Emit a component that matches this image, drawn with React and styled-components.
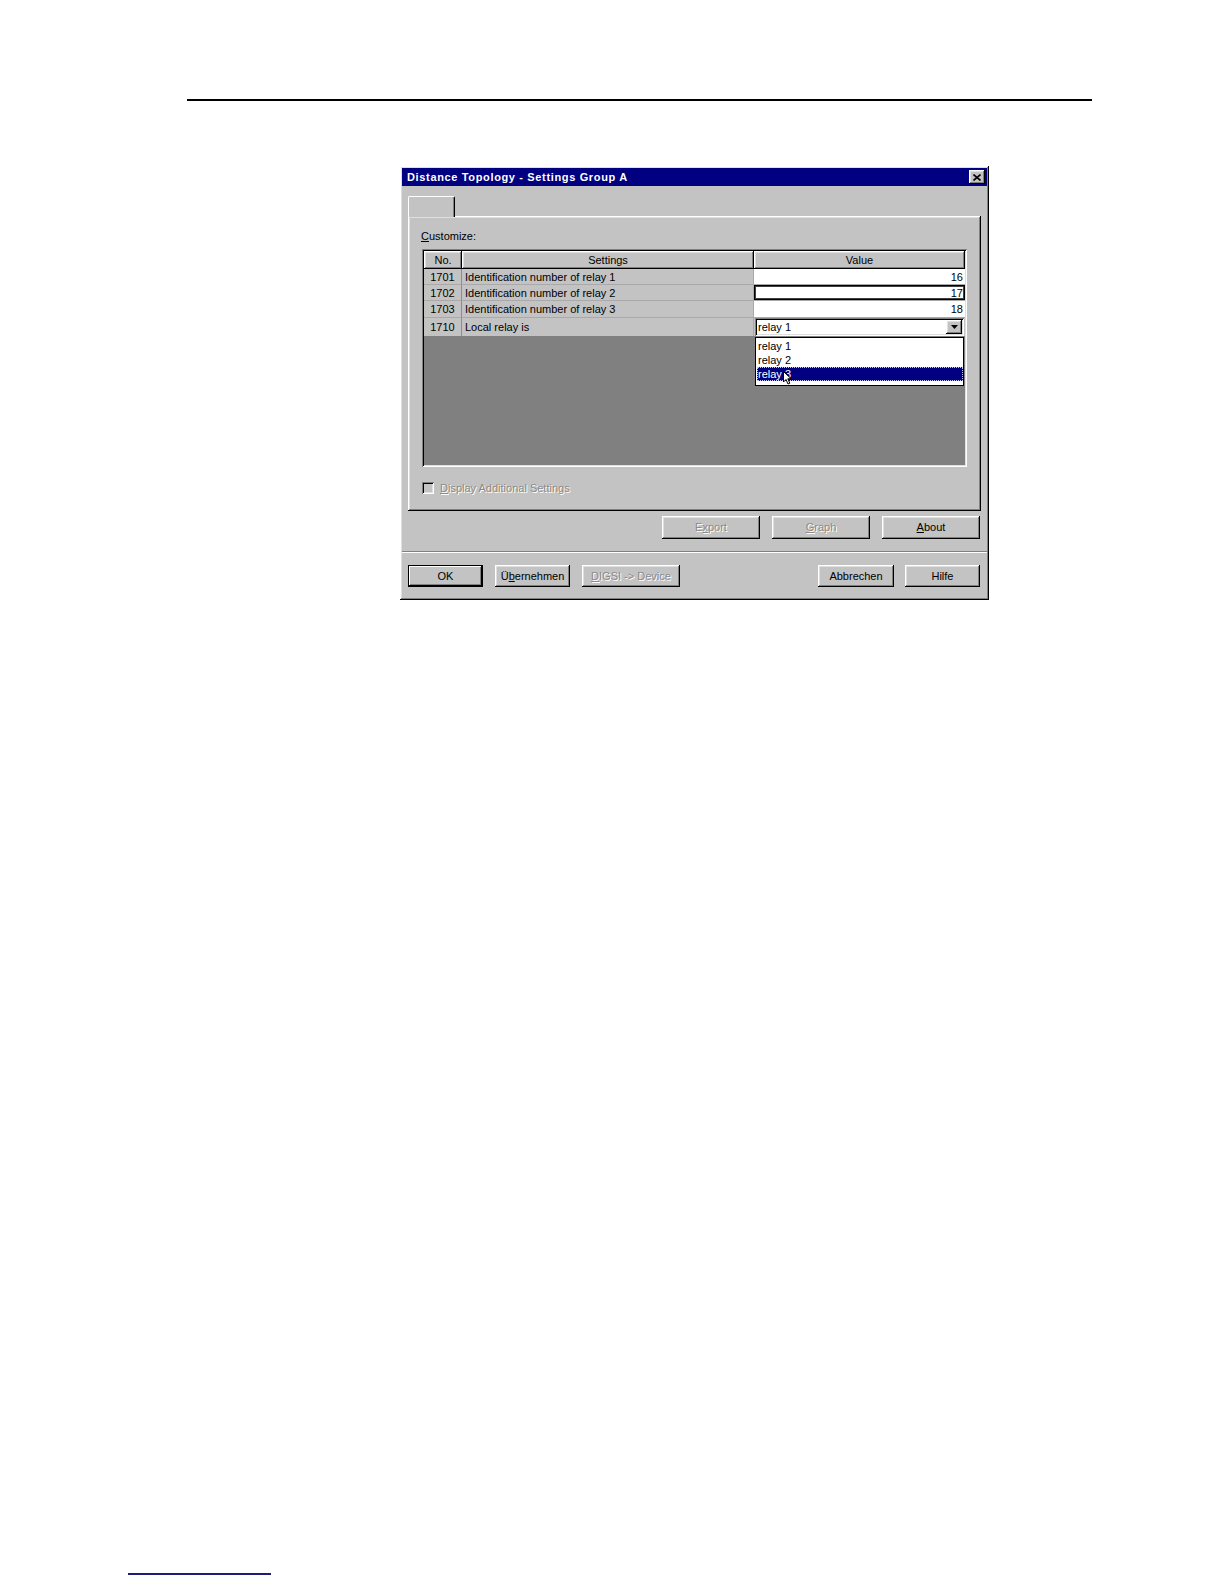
import React from "react";
import styled, { createGlobalStyle, css } from "styled-components";

const GlobalStyle = createGlobalStyle`
  html, body { margin: 0; padding: 0; background: #ffffff; }
  body { font-family: "Liberation Sans", Arial, sans-serif; }
  * { box-sizing: border-box; }
`;

const raised = css`
  box-shadow: inset -1px -1px #000000, inset 1px 1px #ffffff,
    inset -2px -2px #808080, inset 2px 2px #dfdfdf;
`;
const sunken = css`
  box-shadow: inset 1px 1px #808080, inset -1px -1px #ffffff,
    inset 2px 2px #000000, inset -2px -2px #dfdfdf;
`;

const Page = styled.div`
  width: 100%;
  height: 1584px;
  display: flex;
  flex-direction: column;
  padding-top: 99px;
  background: #ffffff;
  overflow: hidden;
`;

const HeaderRule = styled.div`
  margin-left: 187px;
  width: 905px;
  height: 2px;
  background: #000000;
`;

const FooterRule = styled.div`
  margin-top: auto;
  margin-bottom: 9px;
  margin-left: 128px;
  width: 143px;
  height: 2px;
  background: #1c1c7a;
`;

const Dialog = styled.div`
  margin: 65px 0 0 400px;
  width: 589px;
  height: 434px;
  padding: 2px;
  background: #c3c3c3;
  ${raised};
  display: flex;
  flex-direction: column;
  font-size: 11px;
  color: #000;
`;

const TitleBar = styled.div`
  height: 18px;
  background: #000080;
  display: flex;
  align-items: center;
  justify-content: space-between;
  padding: 0 2px 0 5px;
`;

const TitleText = styled.span`
  color: #ffffff;
  font-weight: bold;
  font-size: 11px;
  letter-spacing: 0.65px;
`;

const CloseBtn = styled.div`
  width: 16px;
  height: 14px;
  background: #c3c3c3;
  ${raised};
  display: flex;
  align-items: center;
  justify-content: center;
`;

const Body = styled.div`
  flex: 1;
  display: flex;
  flex-direction: column;
  padding: 10px 6px 11px 6px;
`;

const TabStrip = styled.div`
  height: 20px;
  display: flex;
  align-items: flex-end;
`;

const Tab = styled.div`
  position: relative;
  z-index: 1;
  width: 47px;
  height: 21px;
  margin-bottom: -1px;
  background: #c3c3c3;
  border-top: 1px solid #ffffff;
  border-left: 1px solid #ffffff;
  border-right: 1px solid #000000;
  box-shadow: inset -1px 0 #808080;
  border-radius: 2px 2px 0 0;
`;

const TabPanel = styled.div`
  height: 295px;
  ${raised};
  padding: 14px 14px 0 14px;
  display: flex;
  flex-direction: column;
`;

const Label = styled.div`
  height: 13px;
  line-height: 13px;
  margin-left: -1px;
`;

const U = styled.span`
  text-decoration: underline;
`;

const Grid = styled.div`
  position: relative;
  margin-top: 6px;
  width: 545px;
  height: 218px;
  padding: 2px;
  ${sunken};
  display: flex;
  flex-direction: column;
  background: #808080;
`;

const cols = "38px 292px 1fr";

const HeaderRow = styled.div`
  display: grid;
  grid-template-columns: ${cols};
  height: 18px;
`;

const HeaderCell = styled.div`
  background: #c3c3c3;
  ${raised};
  display: flex;
  align-items: center;
  justify-content: center;
  padding-bottom: 1px;
`;

const Row = styled.div`
  display: grid;
  grid-template-columns: ${cols};
  height: ${(p) => p.$h}px;
  background: #c3c3c3;
`;

const Cell = styled.div`
  display: flex;
  align-items: center;
  padding: 0 3px;
  border-bottom: 1px solid #a9a9a9;
  border-right: 1px solid ${(p) => (p.$first ? "#8c8c8c" : "#a9a9a9")};
  justify-content: ${(p) => (p.$first ? "center" : "flex-start")};
  white-space: nowrap;
`;

const ValueCell = styled.div`
  display: flex;
  align-items: center;
  justify-content: flex-end;
  padding: 0 2px 0 3px;
  background: #ffffff;
  border-bottom: 1px solid #a9a9a9;
  ${(p) =>
    p.$focus &&
    css`
      box-shadow: inset 0 0 0 1px #000, inset 0 0 0 2px #404040;
    `}
`;

const ComboCell = styled.div`
  background: #c3c3c3;
  padding: 0 1px 1px 1px;
  display: flex;
`;

const Combo = styled.div`
  flex: 1;
  background: #ffffff;
  ${sunken};
  padding: 2px 2px 2px 3px;
  display: flex;
  align-items: center;
  justify-content: space-between;
`;

const DropBtn = styled.div`
  width: 16px;
  height: 14px;
  background: #c3c3c3;
  ${raised};
  display: flex;
  align-items: center;
  justify-content: center;
`;

const Rest = styled.div`
  flex: 1;
  background: #808080;
`;

const DropList = styled.div`
  position: absolute;
  left: 333px;
  top: 88px;
  width: 209px;
  height: 49px;
  background: #ffffff;
  border: 1px solid #000000;
  padding: 1px 0 0 1px;
  display: flex;
  flex-direction: column;
`;

const DropItem = styled.div`
  height: 14px;
  line-height: 14px;
  padding-left: 1px;
  ${(p) =>
    p.$selected &&
    css`
      background: #000080;
      color: #ffffff;
      outline: 1px dotted #c8c8ff;
      outline-offset: -1px;
    `}
`;

const Cursor = styled.svg`
  position: absolute;
  left: 361px;
  top: 122px;
`;

const CheckRow = styled.div`
  margin-top: 15px;
  display: flex;
  align-items: center;
  gap: 6px;
`;

const CheckBox = styled.div`
  width: 12px;
  height: 12px;
  background: #c3c3c3;
  ${sunken};
`;

const Disabled = styled.span`
  color: #8a8a8a;
  text-shadow: 1px 1px #ffffff;
`;

const ButtonRow = styled.div`
  display: flex;
  justify-content: ${(p) => (p.$split ? "space-between" : "flex-end")};
  margin-top: ${(p) => p.$mt}px;
  padding-right: 1px;
`;

const Group = styled.div`
  display: flex;
  gap: ${(p) => p.$gap}px;
`;

const Button = styled.div`
  width: ${(p) => p.$w}px;
  height: ${(p) => p.$h}px;
  background: #c3c3c3;
  ${raised};
  ${(p) =>
    p.$default &&
    css`
      box-shadow: inset 0 0 0 1px #000, inset -2px -2px #000,
        inset 2px 2px #ffffff, inset -3px -3px #808080;
    `}
  display: flex;
  align-items: center;
  justify-content: center;
  padding-bottom: 1px;
  white-space: nowrap;
`;

const Separator = styled.div`
  margin: 12px -6px 0 -6px;
  height: 2px;
  border-top: 1px solid #808080;
  border-bottom: 1px solid #ffffff;
`;

const rows = [
  { no: "1701", name: "Identification number of relay 1", value: "16", h: 16 },
  { no: "1702", name: "Identification number of relay 2", value: "17", h: 16, focus: true },
  { no: "1703", name: "Identification number of relay 3", value: "18", h: 17 },
];

export default function App() {
  return (
    <Page>
      <GlobalStyle />
      <HeaderRule />
      <Dialog>
        <TitleBar>
          <TitleText>Distance Topology - Settings Group A</TitleText>
          <CloseBtn>
            <svg width="8" height="7" viewBox="0 0 8 7">
              <path d="M0.5 0.5 L7.5 6.5 M7.5 0.5 L0.5 6.5" stroke="#000" strokeWidth="1.6" />
            </svg>
          </CloseBtn>
        </TitleBar>
        <Body>
          <TabStrip>
            <Tab />
          </TabStrip>
          <TabPanel>
            <Label>
              <U>C</U>ustomize:
            </Label>
            <Grid>
              <HeaderRow>
                <HeaderCell>No.</HeaderCell>
                <HeaderCell>Settings</HeaderCell>
                <HeaderCell>Value</HeaderCell>
              </HeaderRow>
              {rows.map((r) => (
                <Row key={r.no} $h={r.h}>
                  <Cell $first>{r.no}</Cell>
                  <Cell>{r.name}</Cell>
                  <ValueCell $focus={r.focus}>{r.value}</ValueCell>
                </Row>
              ))}
              <Row $h={18}>
                <Cell $first>1710</Cell>
                <Cell>Local relay is</Cell>
                <ComboCell>
                  <Combo>
                    <span>relay 1</span>
                    <DropBtn>
                      <svg width="7" height="4" viewBox="0 0 7 4">
                        <path d="M0 0 H7 L3.5 4 Z" fill="#000" />
                      </svg>
                    </DropBtn>
                  </Combo>
                </ComboCell>
              </Row>
              <Rest />
              <DropList>
                <DropItem>relay 1</DropItem>
                <DropItem>relay 2</DropItem>
                <DropItem $selected>relay 3</DropItem>
              </DropList>
              <Cursor width="10" height="14" viewBox="0 0 10 14">
                <path
                  d="M0.5 0.5 L0.5 11 L3 8.5 L5 13 L6.8 12.2 L4.8 7.8 L8.2 7.8 Z"
                  fill="#ffffff"
                  stroke="#000000"
                  strokeWidth="1"
                />
              </Cursor>
            </Grid>
            <CheckRow>
              <CheckBox />
              <Disabled>
                <U>D</U>isplay Additional Settings
              </Disabled>
            </CheckRow>
          </TabPanel>
          <ButtonRow $mt={5}>
            <Group $gap={12}>
              <Button $w={98} $h={23}>
                <Disabled>
                  E<U>x</U>port
                </Disabled>
              </Button>
              <Button $w={98} $h={23}>
                <Disabled>
                  <U>G</U>raph
                </Disabled>
              </Button>
              <Button $w={98} $h={23}>
                <span>
                  <U>A</U>bout
                </span>
              </Button>
            </Group>
          </ButtonRow>
          <Separator />
          <ButtonRow $mt={12} $split>
            <Group $gap={12}>
              <Button $w={75} $h={22} $default>
                OK
              </Button>
              <Button $w={75} $h={22}>
                <span>
                  Ü<U>b</U>ernehmen
                </span>
              </Button>
              <Button $w={98} $h={22}>
                <Disabled>
                  <U>D</U>IGSI -&gt; Device
                </Disabled>
              </Button>
            </Group>
            <Group $gap={11}>
              <Button $w={76} $h={22}>
                Abbrechen
              </Button>
              <Button $w={75} $h={22}>
                Hilfe
              </Button>
            </Group>
          </ButtonRow>
        </Body>
      </Dialog>
      <FooterRule />
    </Page>
  );
}
